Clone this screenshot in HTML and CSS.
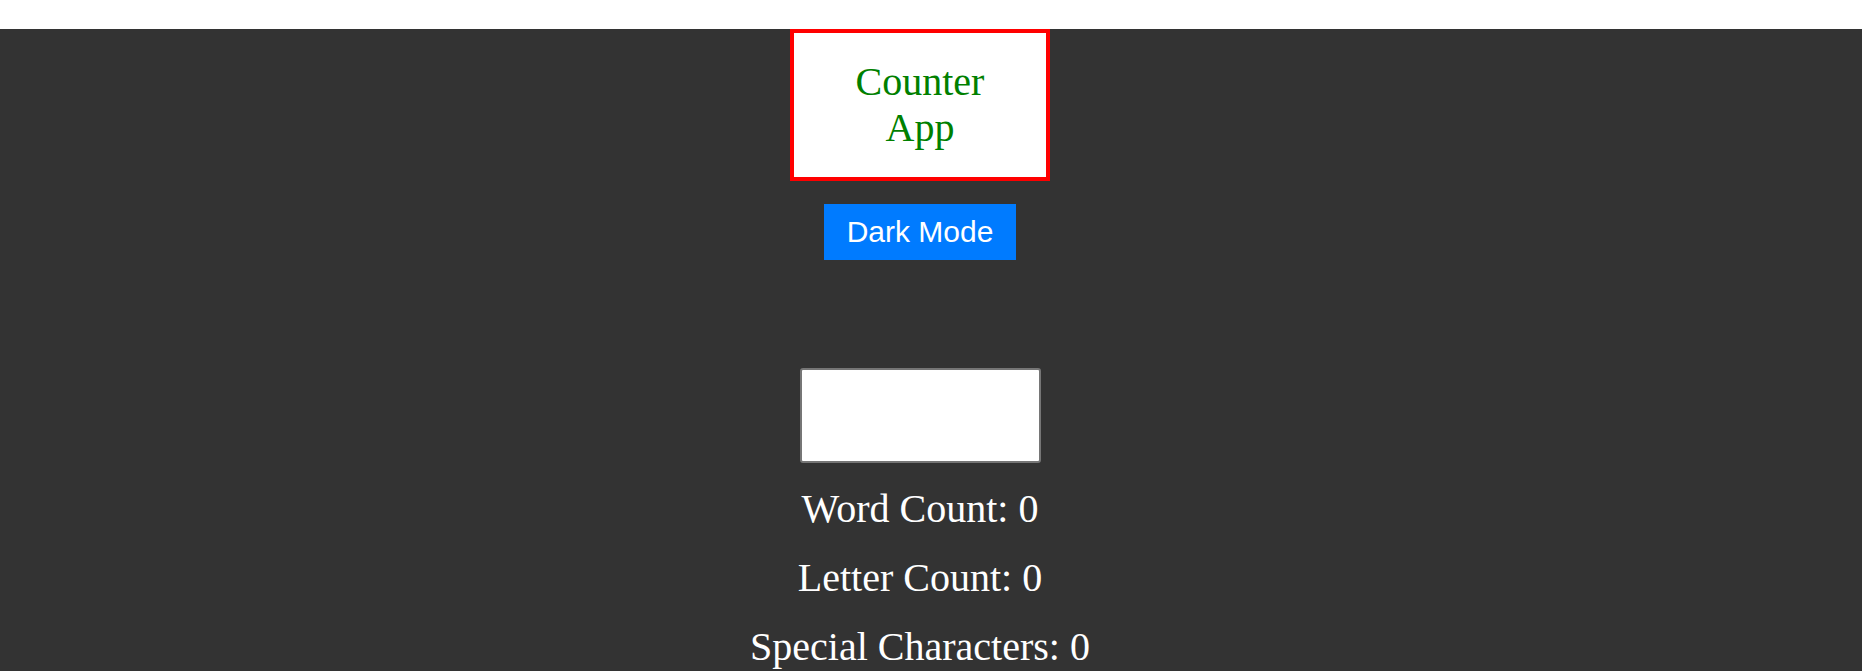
FILE: index.html
```html
<!DOCTYPE html>
<html lang="en">
<head>
<meta charset="utf-8">
<title>Counter App</title>
<link rel="stylesheet" href="styles.css">
</head>
<body>
<div class="app">
  <div class="title-box">
    <h1 class="title">Counter App</h1>
  </div>
  <button class="mode-btn" type="button">Dark Mode</button>
  <input class="text-input" type="text">
  <div class="stats">
    <p class="stat">Word Count: 0</p>
    <p class="stat">Letter Count: 0</p>
    <p class="stat">Special Characters: 0</p>
  </div>
</div>
</body>
</html>
```

FILE: styles.css
```css
html, body {
  margin: 0;
  padding: 0;
  background: #ffffff;
}

body {
  font-family: "Liberation Serif", "Times New Roman", serif;
  overflow: hidden;
  height: 671px;
}

.app {
  margin: 29px 4px 0 0;
  padding: 0 22px 0 0;
  min-height: 642px;
  background: #333333;
  display: flex;
  flex-direction: column;
  align-items: center;
}

.title-box {
  box-sizing: border-box;
  width: 260px;
  height: 152px;
  border: 4px solid #ff0000;
  background: #ffffff;
  padding: 26px 30px;
  margin-bottom: 23px;
}

.title {
  margin: 0;
  font-family: "Liberation Serif", "Times New Roman", serif;
  font-weight: normal;
  font-size: 40px;
  line-height: 46px;
  color: #008000;
  text-align: center;
}

.mode-btn {
  box-sizing: border-box;
  width: 192px;
  height: 56px;
  border: none;
  padding: 0;
  background: #007bff;
  color: #ffffff;
  font-family: "Liberation Sans", Arial, sans-serif;
  font-size: 30px;
  cursor: pointer;
}

.text-input {
  box-sizing: border-box;
  width: 241px;
  height: 95px;
  margin-top: 108px;
  margin-bottom: 23px;
  border: 2px solid #767676;
  border-radius: 3px;
  background: #ffffff;
}

.stats {
  display: flex;
  flex-direction: column;
  align-items: center;
  gap: 23px;
}

.stat {
  margin: 0;
  font-size: 40px;
  line-height: 46px;
  color: #ffffff;
}
```
